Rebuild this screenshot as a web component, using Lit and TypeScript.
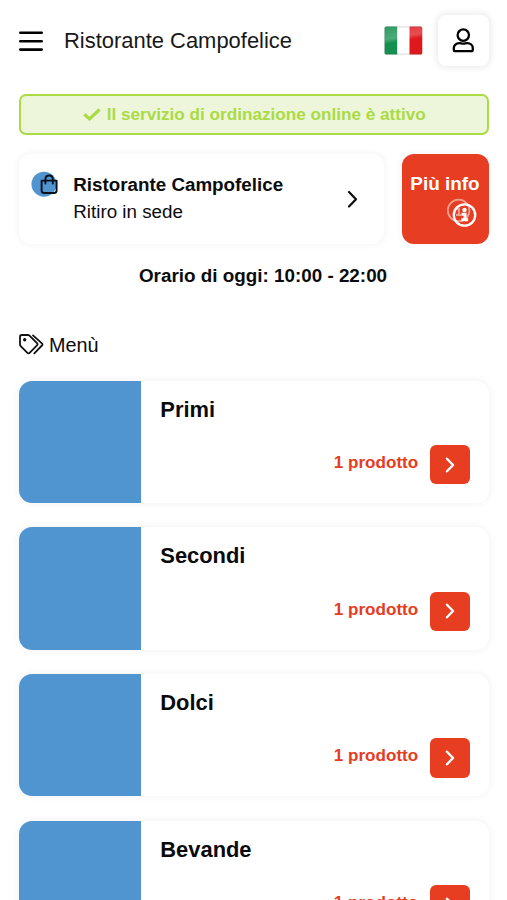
import { LitElement, html, css, svg } from "lit";
import { customElement, property } from "lit/decorators.js";

const chevron = (width: number) => svg`<path d="M2 2L9 9.2L2 16.4" fill="none" stroke="currentColor" stroke-width=${width} stroke-linecap="round" stroke-linejoin="round"/>`;

@customElement("category-card")
class CategoryCard extends LitElement {
  @property() name = "";
  @property({ type: Number }) count = 1;

  static styles = css`
    :host {
      display: flex;
      height: 122.3px;
      border-radius: 13px;
      background: #fff;
      overflow: hidden;
      box-shadow: 0 0 6px 2px rgba(0, 0, 0, 0.04);
    }
    .thumb { width: 122.3px; flex: none; background: #5094d0; }
    .body { flex: 1; padding: 15px 18.7px 0 19px; display: flex; flex-direction: column; }
    .name { font-size: 21.9px; line-height: 27px; font-weight: 700; color: #0a0a0a; margin: 0; }
    .foot { display: flex; justify-content: flex-end; align-items: center; gap: 11.6px; margin-top: 22.3px; }
    .count { font-size: 17.1px; line-height: 20px; font-weight: 700; color: #e63c22; padding-bottom: 3px; }
    .go {
      width: 40px; height: 39.3px; border-radius: 6px; background: #e73d20; color: #fff;
      display: flex; align-items: center; justify-content: center;
    }
    .go svg { width: 10px; height: 16px; }
  `;

  render() {
    return html`
      <div class="thumb"></div>
      <div class="body">
        <h2 class="name">${this.name}</h2>
        <div class="foot">
          <span class="count">${this.count} prodotto</span>
          <span class="go"><svg viewBox="0 0 11 18.4">${chevron(2.8)}</svg></span>
        </div>
      </div>
    `;
  }
}

@customElement("app-root")
class AppRoot extends LitElement {
  static styles = css`
    :host {
      display: block;
      height: 900px;
      overflow: hidden;
      box-sizing: border-box;
      padding: 0 18.5px 0 19px;
      background: #fff;
      color: #0c0c0c;
      font-family: "Liberation Sans", Arial, sans-serif;
    }
    svg { display: block; flex: none; }
    header { display: flex; align-items: center; height: 82px; }
    .burger { width: 24px; height: 22px; }
    .brand { margin-left: 21px; font-size: 21.95px; line-height: 28px; flex: 1; color: #181818; white-space: nowrap; }
    .flag { width: 39px; height: 29px; margin: 0 15px 2px 0; }
    .user {
      width: 51px; height: 51px; margin-bottom: 1px; border-radius: 8px; background: #fff;
      box-shadow: 0 0 6px 2px rgba(0, 0, 0, 0.08);
      display: flex; align-items: center; justify-content: center;
    }
    .user svg { width: 22px; height: 25px; margin-bottom: 1px; }
    .status {
      box-sizing: border-box; height: 41px; margin-top: 12px; padding-left: 1px;
      border: 2px solid #acdc45; border-radius: 7px; background: #edf6db; color: #aadb44;
      display: flex; align-items: center; justify-content: center; gap: 6px;
      font-size: 17.15px; font-weight: 700; white-space: nowrap;
    }
    .status svg { width: 18px; height: 13px; }
    .row { display: flex; gap: 18px; margin-top: 18.5px; height: 90.5px; }
    .place {
      flex: 1; display: flex; border-radius: 12px; box-sizing: border-box; padding: 17.5px 26px 0 12px;
      box-shadow: 0 0 6px 2px rgba(0, 0, 0, 0.04);
    }
    .place .bag { width: 28px; height: 27px; margin-top: 0.3px; }
    .text { margin: -0.5px 0 0 14.3px; flex: 1; font-size: 18.8px; line-height: 27px; white-space: nowrap; }
    .arrow { width: 11px; height: 18.4px; margin-top: 18.5px; }
    .info {
      width: 87px; border-radius: 12px; background: #e73d22; color: #fff;
      display: flex; flex-direction: column; align-items: center;
      font-size: 18.9px; line-height: 24px; font-weight: 700; padding-top: 18.5px; box-sizing: border-box;
      box-shadow: 0 0 6px 2px rgba(0, 0, 0, 0.03);
    }
    .info svg { width: 31px; height: 30px; margin: 2px 0 0 32px; }
    .hours { margin: 19px 0 0; padding-left: 18.5px; text-align: center; font-size: 18.85px; line-height: 25px; font-weight: 700; }
    .menu { display: flex; align-items: center; gap: 5px; margin: 45.2px 0 22.4px; font-size: 19.8px; line-height: 25px; }
    .menu svg { width: 25px; height: 21px; margin-bottom: 1.5px; }
    .list { display: flex; flex-direction: column; gap: 24.4px; }
  `;

  render() {
    return html`
      <header>
        <svg class="burger" viewBox="0 0 24 22">
          <path d="M1.3 2.8H22.7M1.3 11.2H22.7M1.3 19.6H22.7" stroke="#000" stroke-width="2.6" stroke-linecap="round"/>
        </svg>
        <div class="brand">Ristorante Campofelice</div>
        <svg class="flag" viewBox="0 0 39 29">
          <defs>
            <linearGradient id="shine" x1="0" y1="0" x2="0.25" y2="1">
              <stop offset="0" stop-color="#fff" stop-opacity="0.1"/>
              <stop offset="0.45" stop-color="#fff" stop-opacity="0.24"/>
              <stop offset="0.6" stop-color="#fff" stop-opacity="0"/>
            </linearGradient>
            <clipPath id="edge"><rect x="0.6" y="0.6" width="37.6" height="27.8" rx="1.5"/></clipPath>
          </defs>
          <g clip-path="url(#edge)">
            <rect width="39" height="29" fill="#fff"/>
            <rect width="13.2" height="29" fill="#169052"/>
            <rect x="25.5" width="13.5" height="29" fill="#e0181c"/>
            <rect width="39" height="29" fill="url(#shine)"/>
          </g>
          <rect x="0.9" y="0.9" width="37" height="27.2" rx="1.3" fill="none" stroke="#555" stroke-opacity="0.28" stroke-width="0.8"/>
        </svg>
        <div class="user">
          <svg viewBox="0 0 22 25" fill="none" stroke="#000" stroke-width="2.3" stroke-linejoin="round">
            <circle cx="11.3" cy="7.1" r="5.7"/>
            <path d="M7.5 15.1C4 15.1 1.8 17.3 1.8 20.3V21.5C1.8 22.5 2.3 23.2 3.4 23.2H19.2C20.3 23.2 20.8 22.5 20.8 21.5V20.3C20.8 17.3 18.6 15.1 15.1 15.1C13.6 15.1 12.9 15.7 11.3 15.7S9 15.1 7.5 15.1Z"/>
          </svg>
        </div>
      </header>
      <div class="status">
        <svg viewBox="0 0 18 13"><path d="M1.4 6.2L6.5 10.9L16.6 1.5" fill="none" stroke="currentColor" stroke-width="3.2"/></svg>
        <span>Il servizio di ordinazione online è attivo</span>
      </div>
      <div class="row">
        <div class="place">
          <svg class="bag" viewBox="0 0 28 27">
            <circle cx="13" cy="13.2" r="12.5" fill="#5094d0"/>
            <g fill="none" stroke="#07101c" stroke-width="1.9" stroke-linejoin="round" stroke-linecap="round">
              <path d="M10.6 9.6H25.6V19.6Q25.6 22 23.2 22H13Q10.6 22 10.6 19.6Z"/>
              <path d="M14.4 12.6V8.4C14.4 3.2 21.8 3.2 21.8 8.4V12.6"/>
            </g>
          </svg>
          <div class="text"><b>Ristorante Campofelice</b><br />Ritiro in sede</div>
          <svg class="arrow" viewBox="0 0 11 18.4">${chevron(2.2)}</svg>
        </div>
        <div class="info">
          <span>Più info</span>
          <svg viewBox="0 0 31 30" fill="none" stroke="#fff">
            <g stroke-opacity="0.5">
              <circle cx="12.6" cy="12.4" r="10.8" stroke-width="1.8"/>
              <path d="M10.5 11H12.9V17M10 17H15.5" stroke-width="2"/>
            </g>
            <circle cx="18.5" cy="17" r="10.7" stroke-width="2.3"/>
            <circle cx="18.5" cy="12" r="2.2" fill="#fff" stroke="none"/>
            <path d="M15.6 16.2H19V21.5M15.3 21.8H22.1" stroke-width="3"/>
          </svg>
        </div>
      </div>
      <p class="hours">Orario di oggi: 10:00 - 22:00</p>
      <div class="menu">
        <svg viewBox="0 0 25 21" fill="none" stroke="#111" stroke-width="1.8" stroke-linejoin="round" stroke-linecap="round">
          <path d="M1 2.8Q1 1 2.8 1H8.8Q9.8 1 10.5 1.7L18 9.2Q19.1 10.3 18 11.4L10.6 18.8Q9.5 19.9 8.4 18.8L1.7 12.1Q1 11.4 1 10.4Z"/>
          <path d="M14 1.4L22.9 9.3Q24.1 10.4 22.9 11.5L15.3 19.3"/>
          <circle cx="5.7" cy="5.7" r="1.7" fill="#111" stroke="none"/>
        </svg>
        <span>Menù</span>
      </div>
      <div class="list">
        ${["Primi", "Secondi", "Dolci", "Bevande"].map(
          (name) => html`<category-card .name=${name} .count=${1}></category-card>`
        )}
      </div>
    `;
  }
}
